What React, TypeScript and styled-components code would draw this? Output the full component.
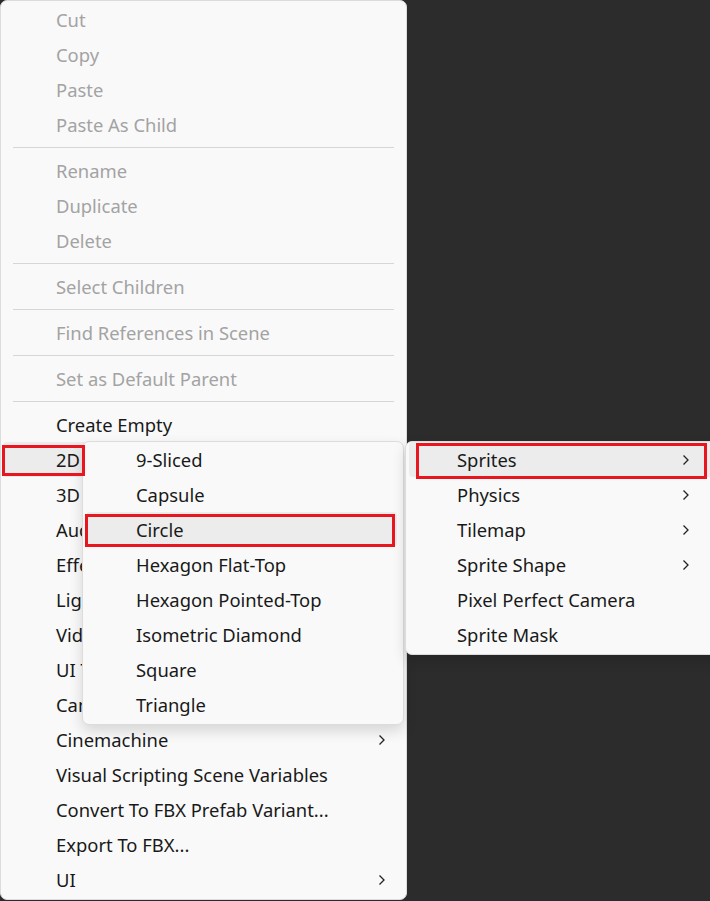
import React from 'react';
import styled, { createGlobalStyle } from 'styled-components';

const GlobalStyle = createGlobalStyle`
  html, body {
    margin: 0;
    padding: 0;
    background: #2c2c2c;
    overflow: hidden;
  }
  body {
    font-family: "Noto Sans", "Open Sans", sans-serif;
  }
`;

interface Mark {
  left: number;
  top: number;
  width: number;
  height: number;
}

interface MenuEntry {
  label?: string;
  disabled?: boolean;
  sub?: boolean;
  active?: boolean;
  sep?: boolean;
  mark?: Mark;
}

const mainItems: MenuEntry[] = [
  { label: 'Cut', disabled: true },
  { label: 'Copy', disabled: true },
  { label: 'Paste', disabled: true },
  { label: 'Paste As Child', disabled: true },
  { sep: true },
  { label: 'Rename', disabled: true },
  { label: 'Duplicate', disabled: true },
  { label: 'Delete', disabled: true },
  { sep: true },
  { label: 'Select Children', disabled: true },
  { sep: true },
  { label: 'Find References in Scene', disabled: true },
  { sep: true },
  { label: 'Set as Default Parent', disabled: true },
  { sep: true },
  { label: 'Create Empty' },
  { label: '2D', sub: true, active: true, mark: { left: -1, top: 3, width: 83, height: 31 } },
  { label: '3D Object', sub: true },
  { label: 'Audio', sub: true },
  { label: 'Effects', sub: true },
  { label: 'Light', sub: true },
  { label: 'Video', sub: true },
  { label: 'UI Toolkit', sub: true },
  { label: 'Camera' },
  { label: 'Cinemachine', sub: true },
  { label: 'Visual Scripting Scene Variables' },
  { label: 'Convert To FBX Prefab Variant...' },
  { label: 'Export To FBX...' },
  { label: 'UI', sub: true },
];

const spriteItems: MenuEntry[] = [
  { label: '9-Sliced' },
  { label: 'Capsule' },
  { label: 'Circle', active: true, mark: { left: -1, top: 2, width: 310, height: 33 } },
  { label: 'Hexagon Flat-Top' },
  { label: 'Hexagon Pointed-Top' },
  { label: 'Isometric Diamond' },
  { label: 'Square' },
  { label: 'Triangle' },
];

const twoDItems: MenuEntry[] = [
  { label: 'Sprites', sub: true, active: true, mark: { left: 7, top: 1, width: 291, height: 36 } },
  { label: 'Physics', sub: true },
  { label: 'Tilemap', sub: true },
  { label: 'Sprite Shape', sub: true },
  { label: 'Pixel Perfect Camera' },
  { label: 'Sprite Mask' },
];

const Screen = styled.div`
  position: relative;
  width: 710px;
  height: 901px;
`;

const Menu = styled.div<{ $width: number }>`
  box-sizing: border-box;
  width: ${(p) => p.$width}px;
  background: #f9f9f9;
  border: 1px solid #dcdcdc;
  border-radius: 7px;
  padding: 1px 0 2px;
  display: flex;
  flex-direction: column;
`;

const FloatingMenu = styled(Menu)<{ $left: number; $top: number }>`
  position: absolute;
  z-index: 1;
  left: ${(p) => p.$left}px;
  top: ${(p) => p.$top}px;
  padding: 0 0 2px;
  box-shadow: 0 6px 14px rgba(0, 0, 0, 0.14);
`;

const Row = styled.div<{ $indent: number; $inset: number; $disabled?: boolean; $active?: boolean; $chevronAt: number }>`
  height: 35px;
  display: flex;
  align-items: center;
  position: relative;
  padding-left: ${(p) => p.$indent}px;
  margin: 0 6px 0 ${(p) => p.$inset}px;
  border-radius: 4px;
  font-size: 18.4px;
  color: ${(p) => (p.$disabled ? '#a3a3a3' : '#191919')};
  background: ${(p) => (p.$active ? '#ececec' : 'transparent')};
  white-space: nowrap;

  svg {
    position: absolute;
    left: ${(p) => p.$chevronAt}px;
    top: 12px;
  }
`;

const Separator = styled.div`
  height: 11px;
  display: flex;
  align-items: center;
  padding: 0 12px;

  &::after {
    content: '';
    flex: 1;
    height: 1px;
    background: #d6d6d6;
  }
`;

// red annotation frame drawn over a highlighted row
const Marker = styled.span`
  position: absolute;
  z-index: 5;
  box-sizing: border-box;
  border: 3px solid #e8161f;
  pointer-events: none;
`;

const Chevron = () => (
  <svg width="8" height="12" viewBox="0 0 8 12">
    <polyline points="1.5,1.5 6,6 1.5,10.5" fill="none" stroke="#222" strokeWidth="1.3" />
  </svg>
);

const MenuRows: React.FC<{ items: MenuEntry[]; indent: number; inset: number; chevronAt: number }> = ({
  items,
  indent,
  inset,
  chevronAt,
}) => (
  <>
    {items.map((it, i) =>
      it.sep ? (
        <Separator key={i} />
      ) : (
        <Row
          key={i}
          $indent={indent}
          $inset={inset}
          $disabled={it.disabled}
          $active={it.active}
          $chevronAt={chevronAt}
        >
          {it.label}
          {it.sub && <Chevron />}
          {it.mark && (
            <Marker
              style={{ left: it.mark.left, top: it.mark.top, width: it.mark.width, height: it.mark.height }}
            />
          )}
        </Row>
      )
    )}
  </>
);

const App: React.FC = () => {
  return (
    <Screen>
      <GlobalStyle />
      <Menu $width={407}>
        <MenuRows items={mainItems} indent={53} inset={2} chevronAt={375} />
      </Menu>
      <FloatingMenu $width={322} $left={82} $top={441}>
        <MenuRows items={spriteItems} indent={50} inset={3} chevronAt={290} />
      </FloatingMenu>
      <FloatingMenu $width={320} $left={405} $top={441}>
        <MenuRows items={twoDItems} indent={48} inset={3} chevronAt={273} />
      </FloatingMenu>
    </Screen>
  );
};

export default App;
